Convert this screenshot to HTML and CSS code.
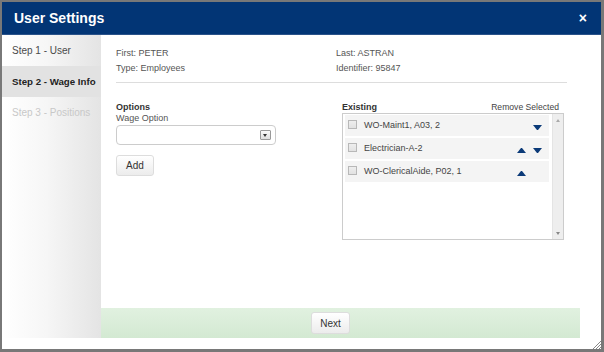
FILE: index.html
```html
<!DOCTYPE html>
<html lang="en">

<head>
  <meta charset="UTF-8" />
  <title>User Settings</title>
  <link rel="stylesheet" href="styles.css">
</head>

<body>
  <div class="dialog">
    <div class="dialog-header">
      <h1>User Settings</h1>
      <span class="close">&times;</span>
    </div>

    <div class="dialog-body">
      <ul class="steps">
        <li class="step">Step 1 - User</li>
        <li class="step active">Step 2 - Wage Info</li>
        <li class="step disabled">Step 3 - Positions</li>
      </ul>

      <div class="main">
        <div class="content">
          <div class="info">
            <div class="info-col">
              <p>First: PETER</p>
              <p>Type: Employees</p>
            </div>
            <div class="info-col">
              <p>Last: ASTRAN</p>
              <p>Identifier: 95847</p>
            </div>
          </div>

          <div class="panels">
            <div class="options">
              <h3>Options</h3>
              <label>Wage Option</label>
              <div class="select">
                <span class="select-btn"></span>
              </div>
              <button class="btn add-btn">Add</button>
            </div>

            <div class="existing">
              <div class="existing-head">
                <h3>Existing</h3>
                <span>Remove Selected</span>
              </div>
              <div class="list-box">
                <ul class="list">
                  <li class="row">
                    <span class="check"></span>
                    <span class="name">WO-Maint1, A03, 2</span>
                    <span class="arrow"></span>
                    <span class="arrow down"></span>
                  </li>
                  <li class="row">
                    <span class="check"></span>
                    <span class="name">Electrician-A-2</span>
                    <span class="arrow up"></span>
                    <span class="arrow down"></span>
                  </li>
                  <li class="row">
                    <span class="check"></span>
                    <span class="name">WO-ClericalAide, P02, 1</span>
                    <span class="arrow up"></span>
                    <span class="arrow"></span>
                  </li>
                </ul>
                <div class="scrollbar">
                  <span class="sb-up"></span>
                  <span class="sb-down"></span>
                </div>
              </div>
            </div>
          </div>
        </div>

        <div class="footer">
          <button class="btn next-btn">Next</button>
        </div>
      </div>
    </div>

    <svg class="grip" width="9" height="9" viewBox="0 0 9 9">
      <path d="M1 9 L9 1 M4 9 L9 4 M7 9 L9 7" stroke="#888" stroke-width="1" fill="none" />
    </svg>
  </div>
</body>

</html>
```

FILE: styles.css
```css
/* Reset */
* {
  box-sizing: border-box;
  margin: 0;
  padding: 0;
}

body {
  width: 604px;
  height: 352px;
  background: #787878;
  font-family: 'Liberation Sans', Arial, sans-serif;
  color: #555;
  overflow: hidden;
}

/* Dialog frame */
.dialog {
  position: relative;
  margin: 2px 3px 0 2px;
  width: 599px;
  height: 347px;
  background: #fff;
  display: flex;
  flex-direction: column;
}

.dialog-header {
  height: 33px;
  background: #023575;
  border-bottom: 1px solid #2a5289;
  display: flex;
  align-items: center;
  justify-content: space-between;
  padding: 0 14px 0 12px;
  color: #fff;
}

.dialog-header h1 {
  font-size: 14px;
  font-weight: 700;
}

.close {
  font-size: 14px;
  font-weight: 700;
}

.dialog-body {
  display: flex;
  height: 303px;
}

/* Steps sidebar */
.steps {
  list-style: none;
  width: 99px;
  background: linear-gradient(to right, #fff 0%, #f6f6f6 45%, #e4e4e4 100%);
}

.step {
  height: 31px;
  line-height: 31px;
  padding-left: 10px;
  font-size: 10px;
  color: #4a4a4a;
  white-space: nowrap;
}

.step.active {
  background: #e2e2e2;
  font-weight: 700;
  font-size: 9.7px;
  color: #222;
}

.step.disabled {
  color: #c8c8c8;
}

/* Main column */
.main {
  flex: 1;
  display: flex;
  flex-direction: column;
}

.content {
  flex: 1;
  padding: 11px 0 0 15px;
}

.info {
  display: flex;
  width: 451px;
  padding-bottom: 6px;
  border-bottom: 1px solid #ddd;
}

.info-col {
  width: 220px;
}

.info p {
  font-size: 9px;
  line-height: 15px;
  color: #555;
}

.panels {
  display: flex;
  margin-top: 19px;
}

h3 {
  font-size: 9px;
  font-weight: 700;
  color: #333;
  line-height: 11px;
}

.options {
  width: 226px;
}

.options label {
  display: block;
  font-size: 9px;
  line-height: 10px;
  color: #555;
}

.select {
  width: 160px;
  height: 20px;
  margin-top: 2px;
  border: 1px solid #ccc;
  border-radius: 4px;
  display: flex;
  align-items: center;
  justify-content: flex-end;
  padding-right: 4px;
}

.select-btn {
  position: relative;
  width: 11px;
  height: 10px;
  border: 1px solid #999;
  border-radius: 1px;
  background: linear-gradient(#fafafa, #ddd);
}

.select-btn::after {
  content: '';
  position: absolute;
  left: 2px;
  top: 3px;
  border-left: 2.5px solid transparent;
  border-right: 2.5px solid transparent;
  border-top: 3px solid #333;
}

.btn {
  font-family: 'Liberation Sans', Arial, sans-serif;
  font-size: 10px;
  color: #333;
  background: linear-gradient(#fff, #ececec);
  border: 1px solid #ddd;
  border-radius: 3px;
}

.add-btn {
  display: block;
  width: 38px;
  height: 21px;
  margin-top: 10px;
}

/* Existing list */
.existing {
  width: 222px;
}

.existing-head {
  display: flex;
  justify-content: space-between;
  padding-right: 5px;
}

.existing-head span {
  font-size: 8.6px;
  line-height: 11px;
  color: #444;
}

.list-box {
  height: 127px;
  border: 1px solid #ccc;
  display: flex;
  padding: 1px 0 0 2px;
}

.list {
  list-style: none;
  flex: 1;
  display: flex;
  flex-direction: column;
  gap: 2px;
  margin-right: 3px;
}

.row {
  height: 21px;
  background: #f4f4f4;
  display: flex;
  align-items: center;
  padding-left: 3px;
}

.check {
  width: 9px;
  height: 9px;
  border: 1px solid #b8b8b8;
  background: linear-gradient(#eee, #e2e2e2);
  margin-right: 7px;
  margin-top: -2px;
}

.name {
  flex: 1;
  font-size: 9px;
  color: #444;
  margin-top: -2px;
}

.arrow {
  width: 9px;
  height: 5px;
  margin-right: 7px;
  margin-top: 3px;
}

.arrow.up {
  border-left: 4.5px solid transparent;
  border-right: 4.5px solid transparent;
  border-bottom: 5px solid #0b3a78;
}

.arrow.down {
  border-left: 4.5px solid transparent;
  border-right: 4.5px solid transparent;
  border-top: 5px solid #0b3a78;
}

.scrollbar {
  width: 11px;
  margin-top: -1px;
  background: #eee;
  border-left: 1px solid #e4e4e4;
  display: flex;
  flex-direction: column;
  justify-content: space-between;
  align-items: center;
  padding: 5px 0 4px;
}

.sb-up,
.sb-down {
  width: 0;
  height: 0;
  border-left: 2.5px solid transparent;
  border-right: 2.5px solid transparent;
}

.sb-up {
  border-bottom: 3px solid #aaa;
}

.sb-down {
  border-top: 3px solid #888;
}

/* Footer */
.footer {
  height: 30px;
  margin-right: 21px;
  background: linear-gradient(#e1f1e0, #d3e9d2);
  display: flex;
  align-items: center;
  justify-content: center;
  padding-right: 20px;
}

.next-btn {
  width: 39px;
  height: 22px;
}

.grip {
  position: absolute;
  right: 0;
  bottom: 0;
}
```
